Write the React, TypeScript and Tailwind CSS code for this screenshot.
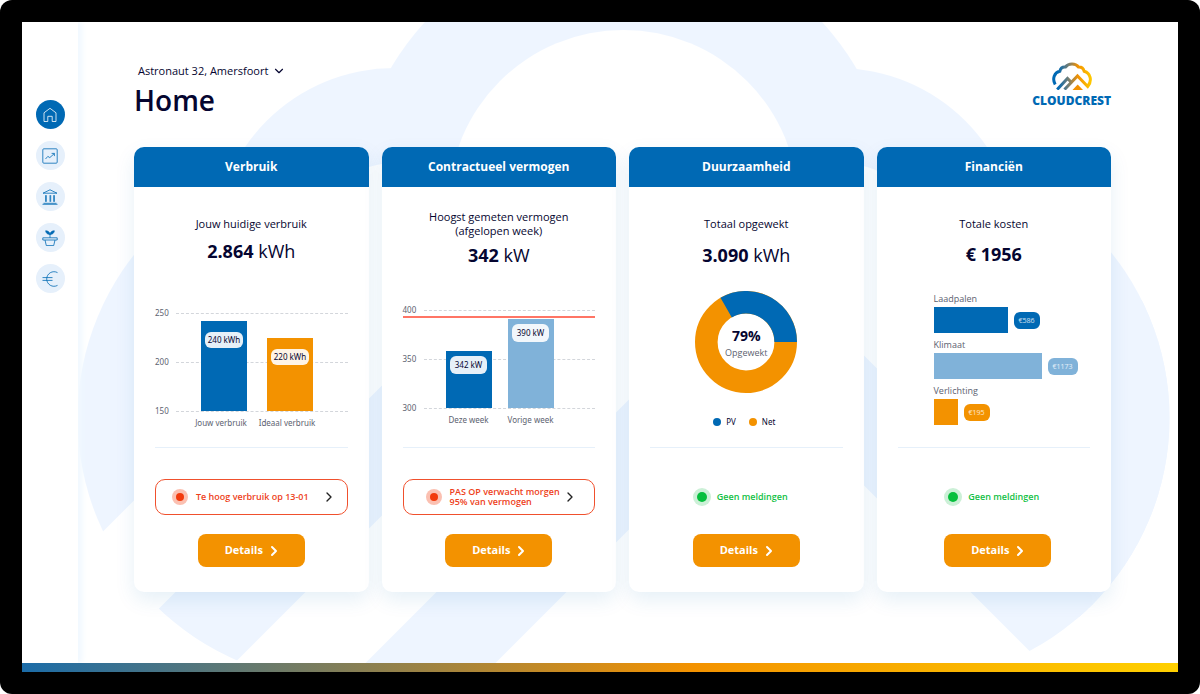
import React from "react";
import { ChevronDown, ChevronRight } from "lucide-react";

interface Bar {
  label: string;
  value: string;
  height: number;
  color: string;
}

const NAV_ITEMS = [
  {
    name: "Home",
    icon: <path d="M2 14.5V5.8L8 1.3l6 4.5v8.7h-3.8V9.3H5.8v5.2z" />,
  },
  {
    name: "Verbruik",
    icon: (
      <>
        <rect x="0.8" y="0.8" width="14.4" height="14.4" rx="1" />
        <path d="M3.5 11l2.3-2.6 2 1.2L12.3 5.6M9.6 5.4h2.8v2.7" />
      </>
    ),
  },
  {
    name: "Vermogen",
    icon: (
      <path d="M1 4.2L8 .8l7 3.4zM3.6 6.2v6.6M8 6.2v6.6M12.4 6.2v6.6M4.3 6.2v6.6M8.700 6.2v6.6M11.700 6.2v6.6M.5 15.3h15M1.500 14.300h13" />
    ),
  },
  {
    name: "Duurzaamheid",
    icon: (
      <>
        <path d="M.8 7.8h14.4v2.2H.8zM3 10l1.3 5.6h7.4L13 10M8 7.8V4" />
        <path d="M8 4.4C5.3 4.4 4 3 3.7.8 6.3 1 7.7 2.2 8 4.4 8.3 2.2 9.7 1 12.3.8 12 3 10.7 4.4 8 4.4z" fill="currentColor" />
      </>
    ),
  },
  {
    name: "Financiën",
    icon: <path d="M15.5 1.6A7.300 7.300 0 1 0 15.5 14.4M.5 6.600h10M.5 9.400h10" />,
  },
];

function Backdrop() {
  return (
    <svg
      className="absolute inset-0 h-full w-full"
      viewBox="22 22 1157 641"
      preserveAspectRatio="xMidYMid slice"
      aria-hidden="true"
    >
      <defs>
        <clipPath id="lobes">
          <circle cx="342" cy="418" r="264" />
          <circle cx="906" cy="418" r="264" />
        </clipPath>
        <mask id="cloud" maskUnits="userSpaceOnUse" x="0" y="0" width="1200" height="700">
          <g fill="white">
            <circle cx="624" cy="205" r="270" />
            <circle cx="395" cy="249" r="181" />
            <circle cx="838" cy="249" r="181" />
            <circle cx="342" cy="418" r="264" />
            <circle cx="906" cy="418" r="264" />
          </g>
          <g fill="black">
            <circle cx="624" cy="205" r="175" />
            <circle cx="395" cy="249" r="86" />
            <circle cx="842" cy="249" r="86" />
            <path d="M250 220H1000L1060 540 1100 700H0V635L250 385z" />
          </g>
        </mask>
      </defs>
      <g fill="#eef5ff">
        <rect width="1200" height="700" mask="url(#cloud)" />
        <path clipPath="url(#lobes)" d="M500 268V398L198 700H68z" />
        <path clipPath="url(#lobes)" d="M769 260L1209 700H1079L769 390z" />
        <path d="M769 260V390L459 700H329z" />
        <path clipPath="url(#lobes)" d="M1060 300h140v400h-120z" />
      </g>
    </svg>
  );
}

function Logo() {
  return (
    <div className="flex flex-col items-center">
      <svg className="h-7 w-10" viewBox="0 0 40 28" fill="none" aria-hidden="true">
        <defs>
          <linearGradient id="logo-fade" gradientUnits="userSpaceOnUse" x1="0" y1="0" x2="40" y2="0">
            <stop offset="0.15" stopColor="#0069b4" />
            <stop offset="0.4" stopColor="#6f7d78" />
            <stop offset="0.65" stopColor="#f39200" />
            <stop offset="1" stopColor="#ffcc00" />
          </linearGradient>
        </defs>
        <g stroke="url(#logo-fade)" strokeWidth="3">
          <path d="M3.200 22.500C0 17 2.200 10.500 7.800 9.300 8.600 6.200 11 4.700 13.500 5 16.500.9 23.500.9 26.500 5c2.800-.2 4.900 1.400 5.700 4.300C38.500 11.200 40.500 18.500 35.700 24.500L25.500 14 12.500 27.500" />
          <path d="M5.200 27.500L15.500 16.500l3.800 3.800" />
        </g>
        <path d="M20.500 28L25.700 22.500l5.300 5.500z" fill="#f39200" />
      </svg>
      <div className="mt-[3px] text-xs leading-4 font-extrabold text-[#0069b4]">CLOUDCREST</div>
    </div>
  );
}

function BarChart({
  ticks,
  bars,
  barsClass,
  pillClass,
  labelsClass,
  limit,
}: {
  ticks: number[];
  bars: Bar[];
  barsClass: string;
  pillClass: string;
  labelsClass: string;
  limit?: boolean;
}) {
  return (
    <div className="font-['Noto_Sans',sans-serif]">
      <div className="grid">
        <div className="col-start-1 row-start-1 flex h-[110px] flex-col justify-between">
          {ticks.map((tick) => (
            <div key={tick} className="flex h-3 items-center text-[8px] text-[#5c6270]">
              <span className="w-[21px]">{tick}</span>
              <span className="flex-1 border-t border-dashed border-[#d3d6db]" />
            </div>
          ))}
        </div>
        {limit && <div className="col-start-1 row-start-1 mt-3 h-[2px] bg-[#ff7565]" />}
        <div className={`col-start-1 row-start-1 flex items-end pb-1.5 ${barsClass}`}>
          {bars.map((bar) => (
            <div
              key={bar.label}
              className={`flex w-[46px] items-start justify-center ${bar.color}`}
              style={{ height: bar.height }}
            >
              <span className={`rounded-md bg-white/90 text-[8px] whitespace-nowrap text-[#050530] ${pillClass}`}>
                {bar.value}
              </span>
            </div>
          ))}
        </div>
      </div>
      <div className={`flex ${labelsClass}`}>
        {bars.map((bar) => (
          <span
            key={bar.label}
            className="flex w-[46px] justify-center text-[8px] leading-3 whitespace-nowrap text-[#5c6270]"
          >
            {bar.label}
          </span>
        ))}
      </div>
    </div>
  );
}

function Donut() {
  return (
    <div className="flex flex-col items-center">
      <div className="grid place-items-center">
        <svg className="col-start-1 row-start-1 h-[102px] w-[102px]" viewBox="0 0 102 102" aria-hidden="true">
          <circle cx="51" cy="51" r="39.7" fill="none" stroke="#f39200" strokeWidth="22.6" />
          <path d="M90.7 51A39.700 39.700 0 0 0 31.150 16.600" fill="none" stroke="#0069b4" strokeWidth="22.6" />
        </svg>
        <div className="col-start-1 row-start-1 pt-1 text-center">
          <div className="text-sm leading-[18px] font-bold">79%</div>
          <div className="text-[9px] leading-4 text-[#5c6270]">Opgewekt</div>
        </div>
      </div>
      <div className="mt-[23px] mr-1 flex gap-[13px] font-['Noto_Sans',sans-serif] text-[8px] leading-3">
        <span className="flex items-center gap-[5px]">
          <span className="h-2 w-2 rounded-full bg-[#0069b4]" />
          PV
        </span>
        <span className="flex items-center gap-[5px]">
          <span className="h-2 w-2 rounded-full bg-[#f39200]" />
          Net
        </span>
      </div>
    </div>
  );
}

const COSTS = [
  { name: "Laadpalen", amount: "€586", width: 74, color: "bg-[#0069b4]" },
  { name: "Klimaat", amount: "€1173", width: 108, color: "bg-[#80b2d9]" },
  { name: "Verlichting", amount: "€195", width: 24, color: "bg-[#f39200]" },
];

function CostBars() {
  return (
    <div className="flex flex-col gap-1.5 pl-9">
      {COSTS.map((cost) => (
        <div key={cost.name}>
          <div className="text-[9px] leading-3 text-[#5c6270]">{cost.name}</div>
          <div className="mt-0.5 flex items-center gap-1.5">
            <div className={`h-[26px] ${cost.color}`} style={{ width: cost.width }} />
            <span className={`rounded-md px-[5px] text-[7px] leading-[17px] text-white/80 ${cost.color}`}>
              {cost.amount}
            </span>
          </div>
        </div>
      ))}
    </div>
  );
}

function Card({
  title,
  label,
  value,
  unit,
  headClass,
  valueClass,
  chartClass,
  alert,
  alertClass = "",
  footClass = "",
  children,
}: {
  title: string;
  label: React.ReactNode;
  value: string;
  unit?: string;
  headClass: string;
  valueClass: string;
  chartClass: string;
  alert?: React.ReactNode;
  alertClass?: string;
  footClass?: string;
  children: React.ReactNode;
}) {
  return (
    <section className="overflow-hidden rounded-[10px] bg-white shadow-[0_8px_20px_rgba(0,105,180,0.1)]">
      <h2 className="bg-[#0069b4] text-center text-xs leading-10 font-bold text-white">{title}</h2>
      <div className="px-[21px] pb-[25px]">
        <div className="h-[261px] border-b border-[#e6f0fa]">
          <div className={`text-center ${headClass}`}>
            <p className="text-[11px] leading-[14px]">{label}</p>
            <p className={`text-lg leading-6 ${valueClass}`}>
              <b>{value}</b> {unit}
            </p>
          </div>
          <div className={chartClass}>{children}</div>
        </div>
        <div className={`flex flex-col items-center pt-[31px] ${footClass}`}>
          {alert ? (
            <button
              className={`flex h-9 w-full items-center gap-2 rounded-[10px] border border-[#f0502d] text-left text-[9px] leading-[10px] font-semibold text-[#ee3f1b] ${alertClass}`}
            >
              <span className="flex h-4 w-4 shrink-0 items-center justify-center rounded-full bg-[#fbc0b1]">
                <span className="h-2 w-2 rounded-full bg-[#f23a0c]" />
              </span>
              <span className="min-w-0 flex-1 whitespace-nowrap">{alert}</span>
              <ChevronRight className="h-4 w-4 shrink-0 text-[#222222]" />
            </button>
          ) : (
            <div className="mr-3 flex h-9 items-center gap-1.5 text-[9px] font-semibold text-[#12bf45]">
              <span className="flex h-[18px] w-[18px] items-center justify-center rounded-full bg-[#ccf0d7]">
                <span className="h-[10px] w-[10px] rounded-full bg-[#06bf3d]" />
              </span>
              Geen meldingen
            </div>
          )}
          <button className="mt-[19px] flex h-[33px] w-[107px] items-center justify-center gap-[3px] rounded-lg bg-[#f39200] pl-1 text-[11px] font-bold text-white">
            Details
            <ChevronRight className="h-4 w-4" strokeWidth={3} />
          </button>
        </div>
      </div>
    </section>
  );
}

export default function App() {
  return (
    <div className="flex min-h-screen flex-col rounded-xl bg-black p-[22px] font-['Open_Sans','Noto_Sans',sans-serif] text-[#050530]">
      <div className="relative isolate flex flex-1 overflow-hidden bg-white">
        <Backdrop />
        <nav className="relative flex w-14 shrink-0 flex-col items-center gap-3 bg-white pt-[78px] shadow-[4px_0_6px_#f0f8ff]">
          {NAV_ITEMS.map((item, i) => (
            <a
              key={item.name}
              href="#"
              aria-label={item.name}
              className={`flex h-[29px] w-[29px] items-center justify-center rounded-full ${
                i === 0 ? "bg-[#0069b4] text-white" : "bg-[#e6f0fb] text-[#0069b4]"
              }`}
            >
              <svg className="h-4 w-4" viewBox="0 0 16 16" fill="none" stroke="currentColor" strokeWidth="0.8">
                {item.icon}
              </svg>
            </a>
          ))}
        </nav>
        <main className="relative flex-1 pr-[67px] pb-8 pl-14">
          <header className="flex items-start justify-between pt-10">
            <div>
              <button className="flex items-center gap-1 pl-1 text-[11px] leading-[18px]">
                Astronaut 32, Amersfoort
                <ChevronDown className="h-3.5 w-3.5" strokeWidth={2} />
              </button>
              <h1 className="mt-0.5 text-[28px] leading-9 font-semibold">Home</h1>
            </div>
            <Logo />
          </header>
          <div className="mt-[29px] grid grid-cols-4 gap-[13px]">
            <Card
              title="Verbruik"
              label="Jouw huidige verbruik"
              value="2.864"
              unit="kWh"
              headClass="pt-[30px]"
              valueClass="mt-2"
              chartClass="mt-[44px]"
              alertClass="pr-2.5 pl-4"
              alert="Te hoog verbruik op 13-01"
            >
              <BarChart
                ticks={[250, 200, 150]}
                bars={[
                  { label: "Jouw verbruik", value: "240 kWh", height: 90, color: "bg-[#0069b4]" },
                  { label: "Ideaal verbruik", value: "220 kWh", height: 73, color: "bg-[#f39200]" },
                ]}
                barsClass="gap-5 pl-[46px]"
                pillClass="mt-[11px] px-[3px] leading-4"
                labelsClass="gap-5 pl-[43px]"
              />
            </Card>
            <Card
              title="Contractueel vermogen"
              label={
                <>
                  Hoogst gemeten vermogen
                  <br />
                  (afgelopen week)
                </>
              }
              value="342"
              unit="kW"
              headClass="pt-[23px]"
              valueClass="mt-[5px]"
              chartClass="mt-[37px]"
              alertClass="pr-4 pl-[22px]"
              alert={
                <>
                  PAS OP verwacht morgen
                  <br />
                  95% van vermogen
                </>
              }
            >
              <BarChart
                ticks={[400, 350, 300]}
                bars={[
                  { label: "Deze week", value: "342 kW", height: 57, color: "bg-[#0069b4]" },
                  { label: "Vorige week", value: "390 kW", height: 89, color: "bg-[#80b2d9]" },
                ]}
                barsClass="gap-4 pl-[43px]"
                pillClass="mt-[5px] px-[5px] leading-[18px]"
                labelsClass="gap-4 pl-[43px]"
                limit
              />
            </Card>
            <Card
              title="Duurzaamheid"
              label="Totaal opgewekt"
              value="3.090"
              unit="kWh"
              headClass="pt-[30px]"
              valueClass="mt-3"
              chartClass="mt-6"
            >
              <Donut />
            </Card>
            <Card
              title="Financiën"
              label="Totale kosten"
              value="€ 1956"
              headClass="pt-[30px]"
              valueClass="mt-[11px]"
              chartClass="mt-[27px]"
              footClass="pl-2"
            >
              <CostBars />
            </Card>
          </div>
        </main>
      </div>
      <div className="h-[9px] bg-[linear-gradient(90deg,#1b6ca8_0%,#f39200_58%,#ffd000_100%)]" />
    </div>
  );
}
